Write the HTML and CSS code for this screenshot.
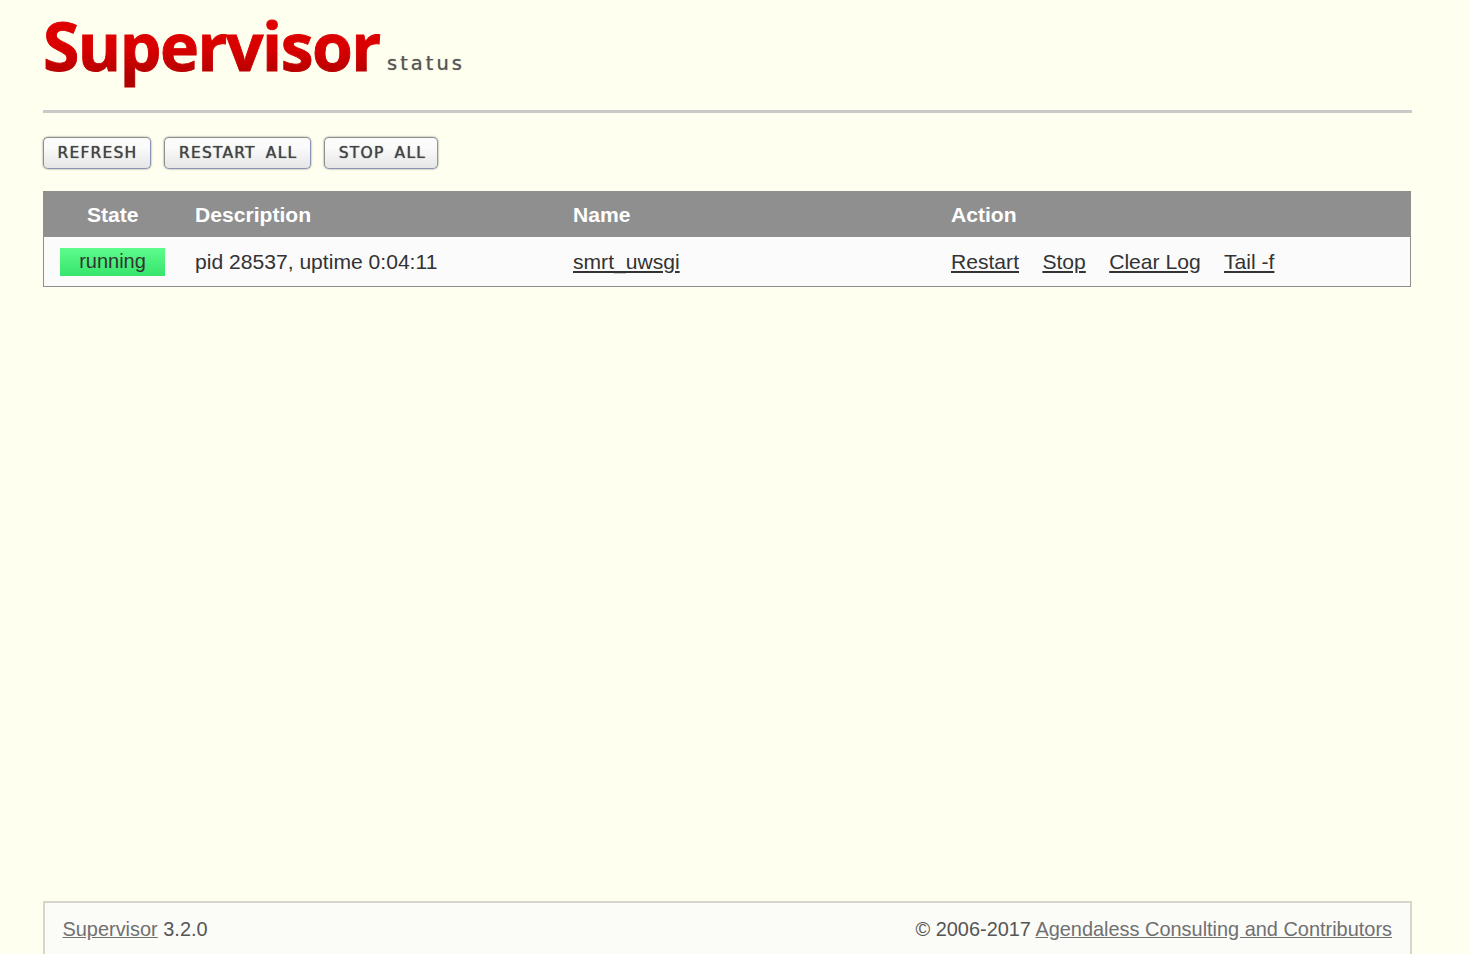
FILE: index.html
```html
<!DOCTYPE html>
<html lang="en">
<head>
    <meta charset="UTF-8">
    <title>Supervisor Status</title>
    <link rel="stylesheet" href="styles.css">
</head>
<body>
    <div class="wrapper">
        <div class="header">
            <svg class="logo" width="343" height="100" viewBox="0 0 343 100">
                <defs>
                    <linearGradient id="logo-red" gradientUnits="userSpaceOnUse" x1="0" y1="25" x2="0" y2="78">
                        <stop offset="0" stop-color="#e00000"/>
                        <stop offset="0.45" stop-color="#d80000"/>
                        <stop offset="1" stop-color="#b00000"/>
                    </linearGradient>
                </defs>
                <text class="logo-name" x="0" y="70.8" fill="url(#logo-red)" stroke="url(#logo-red)">Supervisor</text>
            </svg>
            <span class="logo-status">status</span>
        </div>

        <ul class="actions">
            <li><a class="btn btn-refresh" href="#">Refresh</a></li>
            <li><a class="btn btn-restart" href="#">Restart All</a></li>
            <li><a class="btn btn-stop" href="#">Stop All</a></li>
        </ul>

        <table class="process-table">
            <thead>
                <tr>
                    <th class="col-state">State</th>
                    <th class="col-desc">Description</th>
                    <th class="col-name">Name</th>
                    <th>Action</th>
                </tr>
            </thead>
            <tbody>
                <tr>
                    <td class="col-state"><div class="status-running">running</div></td>
                    <td class="col-desc">pid 28537, uptime 0:04:11</td>
                    <td class="col-name"><a href="#">smrt_uwsgi</a></td>
                    <td>
                        <ul class="row-actions">
                            <li><a href="#">Restart</a></li>
                            <li><a href="#">Stop</a></li>
                            <li><a href="#">Clear Log</a></li>
                            <li><a href="#">Tail -f</a></li>
                        </ul>
                    </td>
                </tr>
            </tbody>
        </table>

        <div class="footer">
            <span><a href="#">Supervisor</a> 3.2.0</span>
            <span>&copy; 2006-2017 <a href="#">Agendaless Consulting and Contributors</a></span>
        </div>
    </div>
</body>
</html>
```

FILE: styles.css
```css
html, body {
    height: 100%;
    margin: 0;
    padding: 0;
}
body {
    background-color: #ffffef;
    font-family: "Liberation Sans", Arial, sans-serif;
    font-size: 21.1px;
    color: #333;
    overflow: hidden;
}
a {
    color: inherit;
}
ul {
    list-style: none;
    margin: 0;
    padding: 0;
}
.wrapper {
    height: 954px;
    margin: 0 57px 0 43px;
    display: flex;
    flex-direction: column;
}

/* logo */
.header {
    height: 110px;
    border-bottom: 3px solid #c9c9c9;
    display: flex;
    align-items: flex-start;
}
.logo {
    display: block;
    flex: none;
}
.logo-name {
    font-family: "Open Sans", sans-serif;
    font-weight: 700;
    font-size: 66px;
    letter-spacing: -1.5px;
    stroke-width: 0.9px;
}
.logo-status {
    font-family: "DejaVu Sans", sans-serif;
    font-size: 19.5px;
    letter-spacing: 3px;
    color: #555;
    text-shadow: 0 0 1px #888;
    margin: 52px 0 0 1px;
}

/* buttons */
.actions {
    display: flex;
    gap: 13px;
    margin-top: 24px;
}
.btn {
    display: block;
    height: 32px;
    line-height: 30px;
    padding: 0 13px 0 13.5px;
    box-sizing: border-box;
    border: 1px solid #8e8e8e;
    border-right-color: #8a93b5;
    border-bottom-color: #8a93b5;
    border-radius: 5px;
    box-shadow: 0 0 2px #777;
    background: linear-gradient(#fbfbfb 30%, #e6e6e6);
    font-family: "DejaVu Sans", sans-serif;
    font-size: 15.5px;
    letter-spacing: 1.2px;
    word-spacing: 4px;
    text-transform: uppercase;
    text-decoration: none;
    color: #444;
    text-shadow: 0 0 1px #444;
    white-space: nowrap;
}
.btn-stop {
    padding-right: 10.5px;
}

/* table */
.process-table {
    width: 1368px;
    margin-top: 22px;
    border-collapse: collapse;
    table-layout: fixed;
    border: 1px solid #8f8f8f;
    border-top: none;
    background: #fbfbfb;
}
.process-table th {
    height: 46px;
    padding: 2px 0 0;
    box-sizing: border-box;
    background: #8f8f8f;
    color: #fff;
    font-weight: 700;
    text-align: left;
}
.process-table td {
    height: 49px;
    padding: 0;
    text-align: left;
}
.process-table th.col-state {
    width: 151.5px;
    padding-right: 13.5px;
    text-align: center;
}
.col-desc {
    width: 378px;
}
.col-name {
    width: 378px;
}
.status-running {
    width: 105px;
    height: 28px;
    line-height: 27px;
    margin: 1px 0 0 16px;
    text-align: center;
    font-size: 20px;
    background: linear-gradient(#5dfc8c, #37e56c);
}
.row-actions {
    display: flex;
    gap: 23.4px;
}

/* footer */
.footer {
    margin-top: auto;
    height: 53px;
    box-sizing: border-box;
    padding: 2px 18px 0 17.5px;
    border: 2px solid #d6d6cc;
    border-bottom: none;
    background: #fbfbf8;
    color: #555;
    font-size: 19.93px;
    display: flex;
    justify-content: space-between;
    align-items: center;
}
.footer a {
    color: #707070;
}
```
